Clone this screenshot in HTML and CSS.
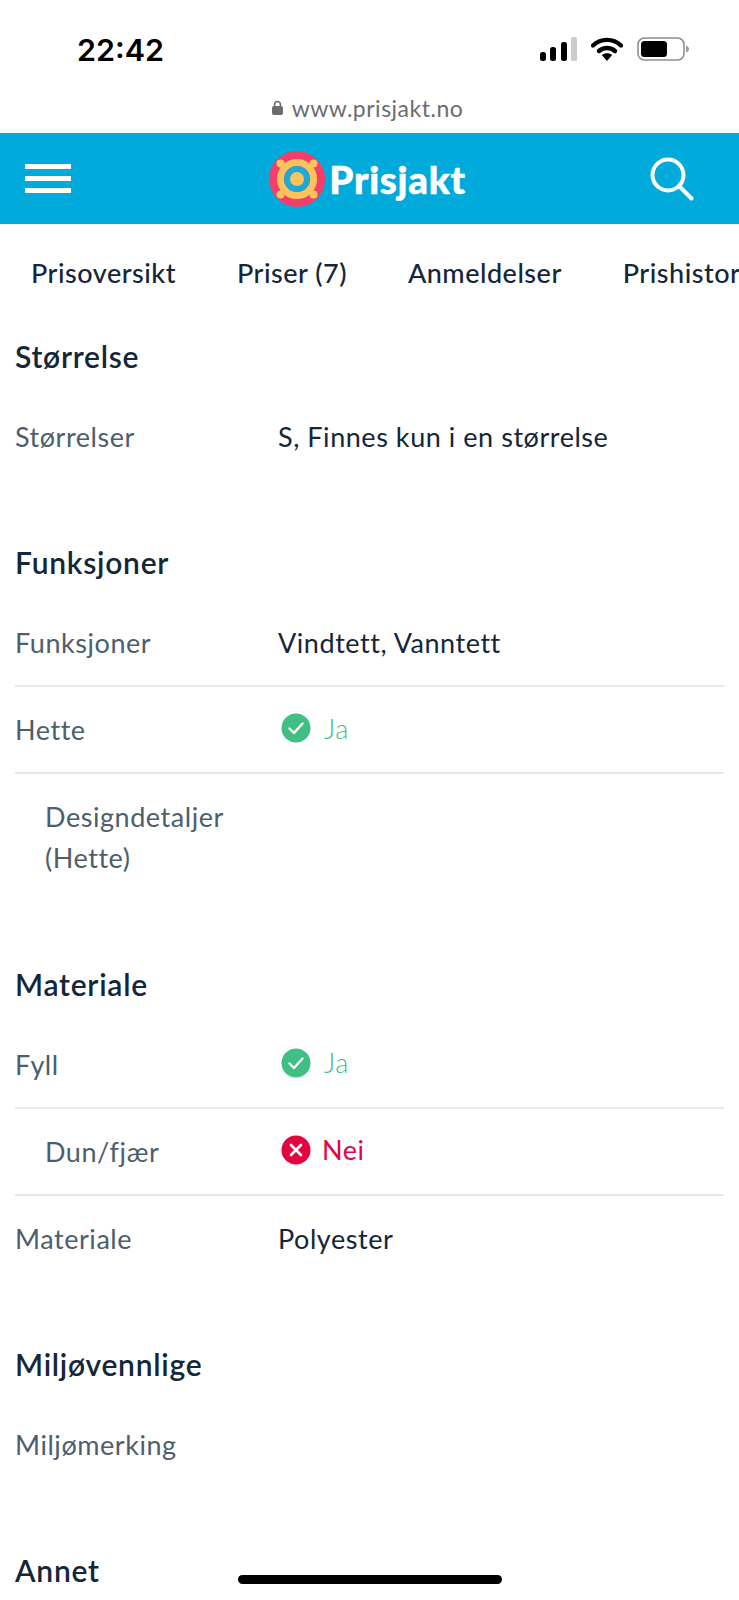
FILE: index.html
```html
<!DOCTYPE html>
<html lang="no">

<head>
    <meta charset="UTF-8">
    <meta name="viewport" content="width=device-width, initial-scale=1.0">
    <title>Prisjakt</title>
    <link rel="stylesheet" href="styles.css">
</head>

<body>
    <div class="phone">
        <!-- statuslinje -->
        <div class="status">
            <span class="clock">22:42</span>
            <div class="status-icons">
                <svg width="37" height="24" viewBox="0 0 37 24">
                    <rect x="0" y="15" width="6" height="9" rx="2.5" fill="#000"/>
                    <rect x="10" y="10" width="6" height="14" rx="2.5" fill="#000"/>
                    <rect x="21" y="5" width="6" height="19" rx="2.5" fill="#000"/>
                    <rect x="31" y="0" width="6" height="24" rx="1.5" fill="#ccc"/>
                </svg>
                <svg width="32" height="24" viewBox="0 0 32 24">
                    <path d="M2 8.5 C10 1 22 1 30 8.5" fill="none" stroke="#000" stroke-width="4.4" stroke-linecap="round"/>
                    <path d="M8 14 C12.5 10 19.5 10 24 14" fill="none" stroke="#000" stroke-width="4.4" stroke-linecap="round"/>
                    <path d="M10.8 18 L16 24 L21.2 18 C18 15.6 14 15.6 10.8 18 Z" fill="#000"/>
                </svg>
                <svg width="52" height="24" viewBox="0 0 52 24">
                    <rect x="1" y="1" width="46" height="22" rx="6.5" fill="none" stroke="#8e8e8e" stroke-width="1.6"/>
                    <rect x="4" y="4" width="26" height="16" rx="3.5" fill="#000"/>
                    <path d="M49 8.5 C51 9.5 52 10.5 52 12 C52 13.5 51 14.5 49 15.5 Z" fill="#9a9a9a"/>
                </svg>
            </div>
        </div>

        <!-- adresselinje -->
        <div class="urlbar">
            <svg width="11" height="15" viewBox="0 0 11 15">
                <path d="M2.6 7 V4.4 C2.6 0.6 8.4 0.6 8.4 4.4 V7" fill="none" stroke="#6c6c70" stroke-width="1.6"/>
                <rect x="0" y="6" width="11" height="9" rx="2" fill="#6c6c70"/>
            </svg>
            <span>www.prisjakt.no</span>
        </div>

        <header class="topbar">
            <div class="burger"><i></i><i></i><i></i></div>
            <div class="logo">
                <svg width="56" height="56" viewBox="0 0 56 56">
                    <circle cx="28" cy="28" r="28" fill="#f43d6b"/>
                    <circle cx="28" cy="28" r="16.5" fill="none" stroke="#fbc35c" stroke-width="7"/>
                    <circle cx="11.5" cy="12.5" r="4" fill="#fbc35c"/>
                    <circle cx="44.5" cy="12.5" r="4" fill="#fbc35c"/>
                    <circle cx="11.5" cy="43.5" r="4" fill="#fbc35c"/>
                    <circle cx="44.5" cy="43.5" r="4" fill="#fbc35c"/>
                    <circle cx="28" cy="28" r="13" fill="#1fa9d6"/>
                    <circle cx="28" cy="28" r="7" fill="#fbc35c"/>
                </svg>
                <span>Prisjakt</span>
            </div>
            <svg class="search" width="44" height="44" viewBox="0 0 44 44">
                <circle cx="18" cy="18" r="15.5" fill="none" stroke="#fff" stroke-width="4"/>
                <path d="M29 29 L41.5 41.5" fill="none" stroke="#fff" stroke-width="4" stroke-linecap="round"/>
            </svg>
        </header>

        <nav class="tabs">
            <a>Prisoversikt</a>
            <a>Priser (7)</a>
            <a>Anmeldelser</a>
            <a>Prishistorikk</a>
        </nav>

        <main class="specs">
            <section class="group">
                <h2>Størrelse</h2>
                <div class="row">
                    <div class="label">Størrelser</div>
                    <div class="value">S, Finnes kun i en størrelse</div>
                </div>
            </section>

            <section class="group">
                <h2>Funksjoner</h2>
                <div class="row">
                    <div class="label">Funksjoner</div>
                    <div class="value">Vindtett, Vanntett</div>
                </div>
                <div class="row">
                    <div class="label">Hette</div>
                    <div class="value yes">
                        <svg width="30" height="30" viewBox="0 0 30 30">
                            <circle cx="15" cy="15" r="14.5" fill="#3fbf83"/>
                            <path d="M8.5 15.5 L13 20 L21.5 10.5" fill="none" stroke="#fff" stroke-width="2.4" stroke-linecap="round" stroke-linejoin="round"/>
                        </svg>
                        Ja
                    </div>
                </div>
                <div class="row">
                    <div class="label sub">Designdetaljer (Hette)</div>
                    <div class="value"></div>
                </div>
            </section>

            <section class="group">
                <h2>Materiale</h2>
                <div class="row">
                    <div class="label">Fyll</div>
                    <div class="value yes">
                        <svg width="30" height="30" viewBox="0 0 30 30">
                            <circle cx="15" cy="15" r="14.5" fill="#3fbf83"/>
                            <path d="M8.5 15.5 L13 20 L21.5 10.5" fill="none" stroke="#fff" stroke-width="2.4" stroke-linecap="round" stroke-linejoin="round"/>
                        </svg>
                        Ja
                    </div>
                </div>
                <div class="row">
                    <div class="label sub">Dun/fjær</div>
                    <div class="value no">
                        <svg width="30" height="30" viewBox="0 0 30 30">
                            <circle cx="15" cy="15" r="14.5" fill="#e2053f"/>
                            <path d="M10 10 L20 20 M20 10 L10 20" fill="none" stroke="#fff" stroke-width="2.6" stroke-linecap="round"/>
                        </svg>
                        Nei
                    </div>
                </div>
                <div class="row">
                    <div class="label">Materiale</div>
                    <div class="value">Polyester</div>
                </div>
            </section>

            <section class="group">
                <h2>Miljøvennlige</h2>
                <div class="row">
                    <div class="label">Miljømerking</div>
                    <div class="value"></div>
                </div>
            </section>

            <section class="group">
                <h2>Annet</h2>
            </section>
        </main>

        <div class="homebar"></div>
    </div>
</body>

</html>
```

FILE: styles.css
```css
* {
    margin: 0;
    padding: 0;
    box-sizing: border-box;
}

body {
    background: #fff;
    font-family: "Lato", "Open Sans", sans-serif;
    color: #14263a;
}

.phone {
    position: relative;
    height: 1600px;
    overflow: hidden;
}

.status {
    display: flex;
    justify-content: space-between;
    align-items: center;
    height: 90px;
    padding: 8px 50px 0 77px;
}

.clock {
    font-family: "Inter", sans-serif;
    font-size: 30.5px;
    font-weight: 600;
    color: #000;
}

.status-icons {
    display: flex;
    align-items: center;
    gap: 14px;
}

.urlbar {
    display: flex;
    justify-content: center;
    align-items: center;
    gap: 9px;
    height: 43px;
    padding: 0 4px 8px 0;
    font-size: 23px;
    color: #6c6c70;
    letter-spacing: 0.5px;
}

.topbar {
    display: flex;
    justify-content: space-between;
    align-items: center;
    height: 91px;
    padding: 0 45px 0 25px;
    background: #00abdb;
}

.burger {
    display: flex;
    flex-direction: column;
    gap: 7px;
    width: 46px;
}

.burger i {
    display: block;
    height: 5px;
    background: #fff;
}

.logo {
    display: flex;
    align-items: center;
    gap: 4px;
    margin-left: 14px;
    color: #fff;
    font-size: 38.5px;
    font-weight: 900;
    letter-spacing: 0.7px;
    -webkit-text-stroke: 0.5px #fff;
}

.tabs {
    display: flex;
    gap: 61px;
    height: 92px;
    padding: 4px 0 0 31px;
    align-items: center;
    overflow: hidden;
    white-space: nowrap;
    font-size: 27px;
    font-weight: 500;
    letter-spacing: 0.5px;
}

.specs {
    padding: 20px 15px 0;
}

.group {
    margin-bottom: 63.3px;
}

.group h2 {
    font-size: 30px;
    font-weight: 600;
    line-height: 40px;
    margin-bottom: 18px;
    letter-spacing: 0.75px;
}

.row {
    display: flex;
    padding: 22px 0;
    border-bottom: 2px solid #e6e8ea;
    font-size: 27px;
    line-height: 41px;
    letter-spacing: 0.55px;
}

.row:last-child {
    border-bottom: 0;
}

.label {
    flex: 0 0 263px;
    color: #4d5e6d;
}

.label.sub {
    padding: 0 30px;
}

.value {
    display: flex;
    align-items: center;
    gap: 13px;
    flex: 1;
}

.value.yes {
    color: #3fbf83;
    font-weight: 300;
    margin-top: -3px;
    padding-left: 3px;
}

.value.no {
    color: #e2053f;
    gap: 11px;
    margin-top: -3px;
    padding-left: 3px;
}

.homebar {
    position: absolute;
    left: 238px;
    bottom: 16px;
    width: 264px;
    height: 9px;
    border-radius: 5px;
    background: #000;
}
```
